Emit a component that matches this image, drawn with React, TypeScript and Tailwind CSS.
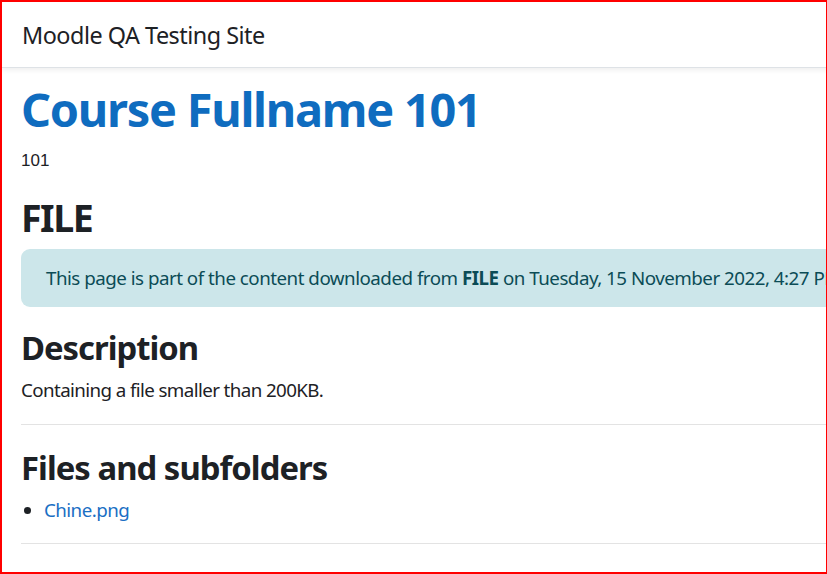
export default function App() {
  return (
    <div className="w-[827px] h-[574px] overflow-hidden border-t-2 border-l-2 border-b-2 border-r border-[#ff0000] bg-white font-['Noto_Sans',sans-serif] text-[#1d2125]">
      <div className="w-[1200px]">
        <nav className="relative z-10 h-[66px] flex items-center pl-5 pt-[3px] bg-white border-b border-[#dee2e6] shadow-[0_2px_5px_rgba(0,0,0,0.07)]">
          <span className="text-[23.4px] leading-none tracking-[-0.5px]">Moodle QA Testing Site</span>
        </nav>

        <main className="pl-[19px]">
          <h1 className="mt-[13px] text-[46.875px] leading-[1.2] font-bold tracking-[-1.25px] text-[#0f6cbf]">
            Course Fullname 101
          </h1>
          <p className="mt-[11px] text-[17px] leading-[1.5] font-['Liberation_Sans',sans-serif]">101</p>

          <h2 className="mt-[21px] text-[37.5px] leading-[1.2] font-bold tracking-[-1.5px]">FILE</h2>

          <div className="mt-[9px] h-[58px] flex items-center pl-[25px] rounded-[9px] bg-[#cce6ea] text-[#0b4c56] text-[18.75px] leading-[1.5] tracking-[-0.5px]">
            <span className="pt-[1px]">
              This page is part of the content downloaded from <strong>FILE</strong> on Tuesday, 15 November 2022, 4:27 PM
            </span>
          </div>

          <h3 className="mt-[21.5px] text-[32.8px] leading-[1.2] font-bold tracking-[-1px]">Description</h3>
          <p className="mt-[8px] text-[18.75px] leading-[1.5] tracking-[-0.6px]">
            Containing a file smaller than 200KB.
          </p>

          <hr className="mt-[20px] border-t border-[#e3e3e3]" />

          <h3 className="mt-[23px] text-[32.8px] leading-[1.2] font-bold tracking-[-0.95px]">Files and subfolders</h3>
          <ul className="mt-[8.5px] list-disc pl-[23px] text-[18.75px] leading-[1.5] tracking-[-0.55px]">
            <li>
              <a href="#" className="text-[#1a6fc4]">Chine.png</a>
            </li>
          </ul>

          <hr className="mt-[19px] border-t border-[#e3e3e3]" />
        </main>
      </div>
    </div>
  );
}
